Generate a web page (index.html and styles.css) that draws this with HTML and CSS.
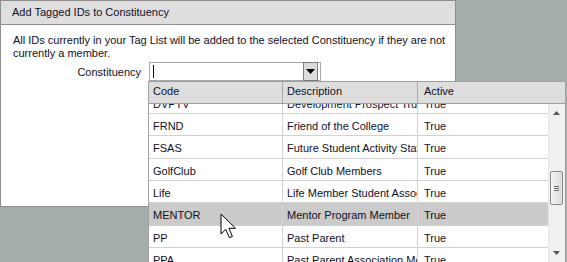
FILE: index.html
```html
<!DOCTYPE html>
<html lang="en">
<head>
  <meta charset="UTF-8">
  <title>Add Tagged IDs to Constituency</title>
  <link rel="stylesheet" href="styles.css">
</head>
<body>

<div class="dialog">
  <div class="dialog-title">Add Tagged IDs to Constituency</div>
  <div class="dialog-body">
    <p class="intro">All IDs currently in your Tag List will be added to the selected Constituency if they are not<br>currently a member.</p>
    <div class="field">
      <label class="field-label">Constituency</label>
      <div class="combo">
        <span class="caret"></span>
        <span class="combo-btn">
          <svg width="9" height="5" viewBox="0 0 9 5"><path d="M0 0h9L4.5 5z" fill="#000"/></svg>
        </span>
      </div>
    </div>
  </div>
</div>

<div class="dropdown">
  <div class="dd-head">
    <div class="cell col-code">Code</div>
    <div class="cell col-desc">Description</div>
    <div class="cell col-active">Active</div>
  </div>
  <div class="dd-body">
    <div class="dd-viewport">
      <div class="dd-rows">
        <div class="row"><div class="cell col-code">DVPTV</div><div class="cell col-desc">Development Prospect Trustee</div><div class="cell col-active">True</div></div>
        <div class="row"><div class="cell col-code">FRND</div><div class="cell col-desc">Friend of the College</div><div class="cell col-active">True</div></div>
        <div class="row"><div class="cell col-code">FSAS</div><div class="cell col-desc">Future Student Activity Staff</div><div class="cell col-active">True</div></div>
        <div class="row"><div class="cell col-code">GolfClub</div><div class="cell col-desc">Golf Club Members</div><div class="cell col-active">True</div></div>
        <div class="row"><div class="cell col-code">Life</div><div class="cell col-desc">Life Member Student Association</div><div class="cell col-active">True</div></div>
        <div class="row selected"><div class="cell col-code">MENTOR</div><div class="cell col-desc">Mentor Program Member</div><div class="cell col-active">True</div></div>
        <div class="row"><div class="cell col-code">PP</div><div class="cell col-desc">Past Parent</div><div class="cell col-active">True</div></div>
        <div class="row"><div class="cell col-code">PPA</div><div class="cell col-desc">Past Parent Association Member</div><div class="cell col-active">True</div></div>
      </div>
    </div>
    <div class="scrollbar">
      <svg class="sb-arrow" width="7" height="4" viewBox="0 0 7 4"><path d="M0 4h7L3.5 0z" fill="#555"/></svg>
      <div class="sb-thumb"><span></span><span></span><span></span></div>
      <svg class="sb-arrow sb-down" width="7" height="4" viewBox="0 0 7 4"><path d="M0 0h7L3.5 4z" fill="#555"/></svg>
    </div>
  </div>
</div>

<svg class="pointer" width="17" height="26" viewBox="0 0 17 26">
  <path d="M1 1v20l4.8-4.6 3.6 8.3 3-1.3-3.5-8.1h6.6z" fill="#fff" stroke="#000" stroke-width="1"/>
</svg>

</body>
</html>
```

FILE: styles.css
```css
body {
  margin: 0;
  padding: 0;
  width: 567px;
  height: 262px;
  overflow: hidden;
  background: #a4adab;
  font-family: "Liberation Sans", Arial, sans-serif;
  font-size: 11px;
  color: #10101f;
}
.dialog {
  width: 454px;
  height: 205px;
  border: 1px solid #8e8e8e;
  background: #fff;
}
.dialog-title {
  height: 23px;
  line-height: 23px;
  padding-left: 11px;
  background: #dedede;
  border-bottom: 1px solid #8e8e8e;
}
.dialog-body {
  padding: 9px 12px 0;
}
.intro {
  margin: 0 0 2px;
  line-height: 13px;
  white-space: nowrap;
}
.field {
  display: flex;
  align-items: center;
  gap: 8px;
}
.field-label {
  width: 128px;
  text-align: right;
}
.combo {
  position: relative;
  width: 170px;
  height: 17px;
  border: 1px solid #a8a8a8;
  background: #fff;
}
.caret {
  position: absolute;
  left: 3px;
  top: 2px;
  width: 1px;
  height: 13px;
  background: #000;
}
.combo-btn {
  position: absolute;
  right: 2px;
  top: -1px;
  width: 13px;
  height: 17px;
  border: 1px solid #7c7c7c;
  background: #dcdcdc;
  display: flex;
  align-items: center;
  justify-content: center;
}

.dropdown {
  position: absolute;
  left: 148px;
  top: 81px;
  width: 416px;
  height: 190px;
  border: 1px solid #a0a0a0;
  background: #fff;
}
.dd-head {
  display: flex;
  height: 21px;
  background: #dedede;
  border-bottom: 1px solid #a0a0a0;
}
.dd-head .cell {
  line-height: 19px;
  border-right: 1px solid #a8a8a8;
}
.dd-head .col-active {
  border-right: none;
}
.cell {
  padding-left: 4px;
  white-space: nowrap;
  overflow: hidden;
  box-sizing: border-box;
}
.col-code {
  width: 134px;
}
.col-desc {
  width: 135px;
}
.col-active {
  flex: 1;
  padding-left: 6px;
}
.dd-body {
  display: flex;
  height: 168px;
}
.dd-viewport {
  width: 400px;
  overflow: hidden;
}
.dd-rows {
  margin-top: -12.3px;
}
.row {
  display: flex;
  box-sizing: border-box;
  height: 22.33px;
  border-bottom: 1px solid #d2d2d2;
}
.row .cell {
  padding-top: 2px;
  line-height: 20px;
}
.row .col-code,
.row .col-desc {
  border-right: 1px solid #d2d2d2;
}
.row.selected {
  background: #cbcbcb;
}
.scrollbar {
  position: relative;
  width: 16px;
  background: #f1f1f1;
  border-left: 1px solid #e4e4e4;
}
.sb-arrow {
  position: absolute;
  left: 4px;
  top: 7px;
}
.sb-down {
  top: 147px;
}
.sb-thumb {
  position: absolute;
  left: 1px;
  top: 67px;
  width: 11px;
  height: 32px;
  border: 1px solid #8a8a8a;
  border-radius: 2px;
  background: linear-gradient(to right, #f4f4f4, #dcdcdc);
  display: flex;
  flex-direction: column;
  justify-content: center;
  align-items: center;
  gap: 1px;
}
.sb-thumb span {
  width: 5px;
  height: 1px;
  background: #6a6a6a;
}
.pointer {
  position: absolute;
  left: 220px;
  top: 213px;
}
```
